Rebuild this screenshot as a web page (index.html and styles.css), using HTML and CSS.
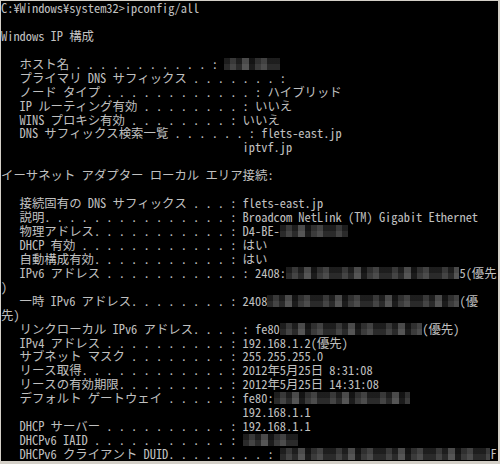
FILE: index.html
```html
<!DOCTYPE html>
<html>
<head>
    <title>ipconfig/all</title>
    <link rel="stylesheet" href="styles.css">
</head>
<body>
    <div class="console">
<pre class="screen">C:¥Windows¥system32>ipconfig/all

Windows IP 構成

   ホスト名 . . . . . . . . . . . : <span class="mask m9"></span>
   プライマリ DNS サフィックス . . . . . . . :
   ノード タイプ . . . . . . . . . . . . : ハイブリッド
   IP ルーティング有効 . . . . . . . . : いいえ
   WINS プロキシ有効 . . . . . . . . : いいえ
   DNS サフィックス検索一覧 . . . . . . : flets-east.jp
                                       iptvf.jp

イーサネット アダプター ローカル エリア接続:

   接続固有の DNS サフィックス . . . : flets-east.jp
   説明. . . . . . . . . . . . . . . : Broadcom NetLink (TM) Gigabit Ethernet
   物理アドレス. . . . . . . . . . . : D4-BE-<span class="mask m11"></span>
   DHCP 有効 . . . . . . . . . . . . : はい
   自動構成有効. . . . . . . . . . . : はい
   IPv6 アドレス . . . . . . . . . . . : 2408:<span class="mask m28"></span>5(優先
)
   一時 IPv6 アドレス. . . . . . . . : 2408<span class="mask m31"></span>(優
先)
   リンクローカル IPv6 アドレス. . . . : fe80<span class="mask m23"></span>(優先)
   IPv4 アドレス . . . . . . . . . . : 192.168.1.2(優先)
   サブネット マスク . . . . . . . . : 255.255.255.0
   リース取得. . . . . . . . . . . . : 2012年5月25日 8:31:08
   リースの有効期限. . . . . . . . . : 2012年5月25日 14:31:08
   デフォルト ゲートウェイ . . . . . : fe80:<span class="mask m22"></span>
                                       192.168.1.1
   DHCP サーバー . . . . . . . . . . : 192.168.1.1
   DHCPv6 IAID . . . . . . . . . . . : <span class="mask m9"></span>
   DHCPv6 クライアント DUID. . . . . . . . : <span class="mask m34"></span>F</pre>
    </div>
</body>
</html>
```

FILE: styles.css
```css
html, body {
    margin: 0;
    padding: 0;
    background-color: #d4d0c8;
}

.console {
    width: 497px;
    height: 460px;
    margin: 1px 2px 3px 1px;
    background-color: #000;
    overflow: hidden;
}

.screen {
    margin: 0;
    padding: 1px 0 0 0;
    font-family: "Noto Sans Mono CJK JP", "MS Gothic", monospace;
    font-size: 12.4px;
    line-height: 13.94px;
    color: #c0c0c0;
    white-space: pre;
}

/* pixelated blur over private values */
.mask {
    display: inline-block;
    height: 12px;
    vertical-align: -1px;
    background-color: #2a2a2a;
    background-image:
        linear-gradient(90deg,
            transparent 0 12%, rgba(255,255,255,0.12) 12% 25%,
            transparent 25% 37%, rgba(255,255,255,0.2) 37% 50%,
            rgba(0,0,0,0.35) 50% 62%, rgba(255,255,255,0.08) 62% 75%,
            rgba(255,255,255,0.16) 75% 87%, transparent 87%),
        linear-gradient(180deg, rgba(0,0,0,0.3) 0 50%, transparent 50%);
    background-size: 50px 100%, 100% 100%;
}

.m9 { width: 9ch; }
.m11 { width: 11ch; }
.m22 { width: 22ch; }
.m23 { width: 23ch; }
.m28 { width: 28ch; }
.m31 { width: 31ch; }
.m34 { width: 34ch; }
```
